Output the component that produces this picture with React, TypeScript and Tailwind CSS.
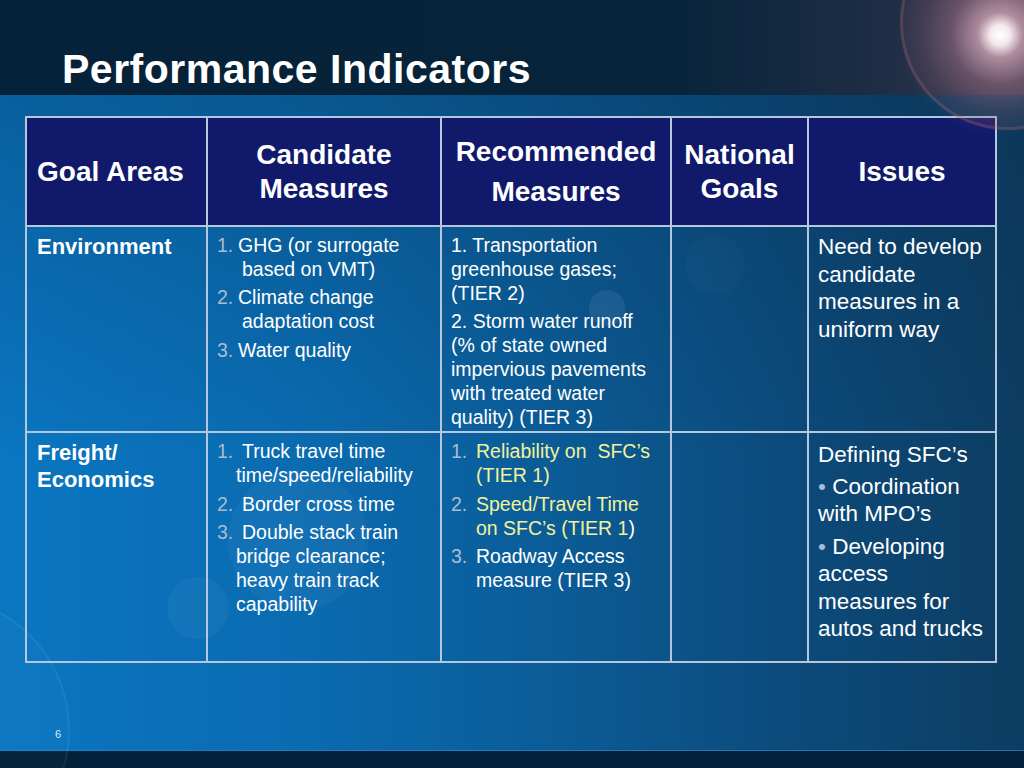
import type { ReactNode } from "react";

type Item = { num?: string; lines: ReactNode[]; indent?: string; gap?: string };

const numColor = "text-[#a9bcd1]";
const yellow = "text-[#f2f29c]";

const NumList = ({ items, numW, cont }: { items: Item[]; numW: string; cont: string }) => (
  <div className="flex flex-col">
    {items.map((it, i) => (
      <div key={i} className={`flex ${i > 0 ? it.gap ?? "mt-[4px]" : ""}`}>
        <span className={`${numW} shrink-0 ${numColor}`}>{it.num}</span>
        <div className="flex flex-col">
          {it.lines.map((l, j) => (
            <div key={j} className={`whitespace-nowrap ${j > 0 ? cont : it.indent ?? ""}`}>
              {l}
            </div>
          ))}
        </div>
      </div>
    ))}
  </div>
);

const cell = "border-r-2 border-b-2 border-[#b4c7dc]";
const head = `${cell} bg-[#111a6a] text-white font-bold text-[28px]`;

export default function App() {
  return (
    <div className="relative w-[1024px] h-[768px] overflow-hidden flex flex-col font-['Liberation_Sans',Arial,sans-serif] text-white">
      {/* title band */}
      <div className="h-[95px] shrink-0 bg-[linear-gradient(90deg,#06223a_0%,#07243a_65%,#1c2d45_85%,#34394f_100%)] flex items-end">
        <h1 className="pl-[62px] pb-[1px] text-[41px] leading-[48px] font-bold tracking-[0.5px] mb-[1px]">
          Performance Indicators
        </h1>
      </div>

      {/* body */}
      <div className="relative flex-1 flex flex-col bg-[linear-gradient(180deg,rgba(6,36,64,0.28)_0%,rgba(6,36,64,0)_55%),linear-gradient(90deg,#0a76c2_0%,#0a6bb0_30%,#0b5b96_55%,#0c4a7a_78%,#0d3d62_100%)]">
        {/* soft bokeh */}
        <div className="pointer-events-none absolute left-[589px] top-[195px] w-[36px] h-[36px] rounded-full bg-white/[0.07]" />
        <div className="pointer-events-none absolute left-[228px] top-[375px] w-[140px] h-[140px] rounded-full bg-white/[0.035]" />
        <div className="pointer-events-none absolute left-[167px] top-[482px] w-[62px] h-[62px] rounded-full bg-white/[0.04]" />
        <div className="pointer-events-none absolute left-[685px] top-[140px] w-[60px] h-[60px] rounded-full bg-white/[0.02]" />
        <div className="pointer-events-none absolute left-[-200px] top-[500px] w-[270px] h-[270px] rounded-full border-2 border-white/[0.06] bg-white/[0.02]" />

        <div className="relative ml-[25px] mt-[21px] w-fit border-t-2 border-l-2 border-[#b4c7dc] grid grid-cols-[181px_234px_230px_137px_188px] grid-rows-[109px_206px_230px]">
          {/* header */}
          <div className={`${head} flex items-center pl-[10px]`}>Goal Areas</div>
          <div className={`${head} flex flex-col items-center justify-center leading-[34px]`}>
            <span>Candidate</span>
            <span>Measures</span>
          </div>
          <div className={`${head} flex flex-col items-center justify-center leading-[40px]`}>
            <span>Recommended</span>
            <span>Measures</span>
          </div>
          <div className={`${head} flex flex-col items-center justify-center leading-[34px]`}>
            <span>National</span>
            <span>Goals</span>
          </div>
          <div className={`${head} flex items-center justify-center`}>Issues</div>

          {/* row 1 */}
          <div className={`${cell} pl-[10px] pt-[6px] font-bold text-[22px] leading-[27px]`}>Environment</div>
          <div className={`${cell} pl-[9px] pt-[6px] text-[19.5px] leading-[24px]`}>
            <NumList
              numW="w-[21px]"
              cont="pl-[4px]"
              items={[
                { num: "1.", lines: ["GHG (or surrogate", "based on VMT)"] },
                { num: "2.", lines: ["Climate change", "adaptation cost"] },
                { num: "3.", lines: ["Water quality"], gap: "mt-[5px]" },
              ]}
            />
          </div>
          <div className={`${cell} pl-[9px] pt-[6px] text-[19.5px] leading-[24px]`}>
            <div className="whitespace-nowrap">1. Transportation</div>
            <div className="whitespace-nowrap">greenhouse gases;</div>
            <div className="whitespace-nowrap">(TIER 2)</div>
            <div className="whitespace-nowrap mt-[4px]">2. Storm water runoff</div>
            <div className="whitespace-nowrap">(% of state owned</div>
            <div className="whitespace-nowrap">impervious pavements</div>
            <div className="whitespace-nowrap">with treated water</div>
            <div className="whitespace-nowrap">quality) (TIER 3)</div>
          </div>
          <div className={cell} />
          <div className={`${cell} pl-[9px] pt-[6px] text-[22.5px] leading-[27.5px]`}>
            <div className="whitespace-nowrap">Need to develop</div>
            <div className="whitespace-nowrap">candidate</div>
            <div className="whitespace-nowrap">measures in a</div>
            <div className="whitespace-nowrap">uniform way</div>
          </div>

          {/* row 2 */}
          <div className={`${cell} pl-[10px] pt-[6px] font-bold text-[22px] leading-[27px]`}>
            <div>Freight/</div>
            <div>Economics</div>
          </div>
          <div className={`${cell} pl-[9px] pt-[6px] text-[19.5px] leading-[24px]`}>
            <NumList
              numW="w-[25px]"
              cont="-ml-[6px]"
              items={[
                { num: "1.", lines: ["Truck travel time", "time/speed/reliability"] },
                { num: "2.", lines: ["Border cross time"], gap: "mt-[5px]" },
                {
                  num: "3.",
                  lines: ["Double stack train", "bridge clearance;", "heavy train track", "capability"],
                },
              ]}
            />
          </div>
          <div className={`${cell} pl-[9px] pt-[6px] text-[19.5px] leading-[24px]`}>
            <NumList
              numW="w-[25px]"
              cont=""
              items={[
                {
                  num: "1.",
                  lines: [
                    <span className={yellow}>Reliability on&nbsp; SFC’s</span>,
                    <span className={yellow}>(TIER 1)</span>,
                  ],
                },
                {
                  num: "2.",
                  gap: "mt-[5px]",
                  lines: [
                    <span className={yellow}>Speed/Travel Time</span>,
                    <span>
                      <span className={yellow}>on SFC’s (TIER 1</span>)
                    </span>,
                  ],
                },
                { num: "3.", lines: ["Roadway Access", "measure (TIER 3)"] },
              ]}
            />
          </div>
          <div className={cell} />
          <div className={`${cell} pl-[9px] pt-[8px] text-[22.5px] leading-[27.5px]`}>
            <div className="whitespace-nowrap">Defining SFC’s</div>
            <div className="whitespace-nowrap mt-[4px]">
              <span className={numColor}>•</span> Coordination
            </div>
            <div className="whitespace-nowrap">with MPO’s</div>
            <div className="whitespace-nowrap mt-[5px]">
              <span className={numColor}>•</span> Developing
            </div>
            <div className="whitespace-nowrap">access</div>
            <div className="whitespace-nowrap">measures for</div>
            <div className="whitespace-nowrap">autos and trucks</div>
          </div>
        </div>

        <div className="relative mt-auto pl-[55px] pb-[9px] text-[11px] leading-[14px] text-[#d5e8f7]">6</div>
        <div className="h-[1px] bg-[#2a86c8]/70" />
      </div>

      {/* bottom band */}
      <div className="h-[17px] shrink-0 bg-[#03213a]" />

      {/* lens flare */}
      <div className="pointer-events-none absolute left-[900px] top-[-85px] w-[215px] h-[215px] rounded-full border-[3px] border-[#c86a78]/25 bg-[radial-gradient(circle_at_center,rgba(150,95,115,0.3)_0%,rgba(120,80,100,0.22)_50%,rgba(100,70,90,0.1)_90%,rgba(100,70,90,0)_100%)]" />
      <div className="pointer-events-none absolute left-[900px] top-[-65px] w-[200px] h-[200px] rounded-full bg-[radial-gradient(circle_at_center,rgba(255,255,255,1)_0%,rgba(255,242,246,0.95)_7%,rgba(240,190,205,0.6)_16%,rgba(200,135,155,0.3)_35%,rgba(170,110,130,0.12)_55%,rgba(160,100,120,0)_72%)]" />
    </div>
  );
}
